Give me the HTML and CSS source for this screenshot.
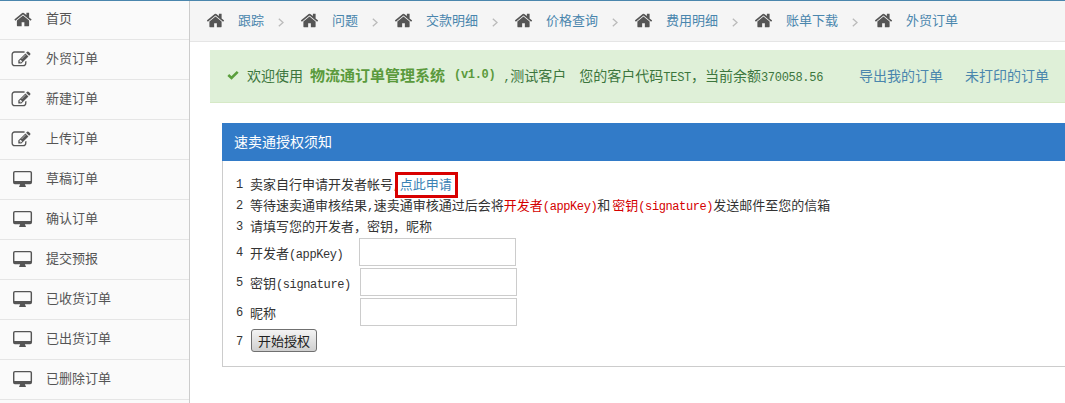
FILE: index.html
```html
<!DOCTYPE html>
<html lang="zh-CN">
<head>
<meta charset="utf-8">
<title>物流通订单管理系统</title>
<link rel="stylesheet" href="styles.css">
</head>
<body>
<svg class="sprite" aria-hidden="true">
  <symbol id="home" viewBox="0 0 1792 1792"><path d="M1472 992v480q0 26-19 45t-45 19h-384v-384h-256v384h-384q-26 0-45-19t-19-45v-480q0-1 .5-3t.5-3l575-474 575 474q1 2 1 6zm223-69l-62 74q-8 9-21 11h-3q-13 0-21-7l-692-577-692 577q-12 8-24 7-13-2-21-11l-62-74q-8-10-7-23.500t11-21.500l719-599q32-26 76-26t76 26l244 204v-195q0-14 9-23t23-9h192q14 0 23 9t9 23v408l219 182q10 8 11 21.500t-7 23.500z"/></symbol>
  <symbol id="edit" viewBox="0 0 1792 1792"><path d="M888 1184l116-116-152-152-116 116v56h96v96h56zm440-720q-16-16-33 1l-350 350q-17 17-1 33t33-1l350-350q17-17 1-33zm80 594v190q0 119-84.500 203.500t-203.500 84.500h-832q-119 0-203.500-84.500t-84.500-203.500v-832q0-119 84.500-203.500t203.500-84.500h832q63 0 117 25 15 7 18 23 3 17-9 29l-49 49q-14 14-32 8-23-6-45-6h-832q-66 0-113 47t-47 113v832q0 66 47 113t113 47h832q66 0 113-47t47-113v-126q0-13 9-22l64-64q15-15 35-7t20 29zm-96-738l288 288-672 672h-288v-288zm444 132l-92 92-288-288 92-92q28-28 68-28t68 28l152 152q28 28 28 68t-28 68z"/></symbol>
  <symbol id="desktop" viewBox="0 0 21 18"><path fill-rule="evenodd" d="M2 0h16a2 2 0 0 1 2 2v10a2 2 0 0 1-2 2h-5.500q.2 1.300 1 2v1h-7v-1q.8-.7 1-2H2a2 2 0 0 1-2-2V2a2 2 0 0 1 2-2zm0 1.500a.5.5 0 0 0-.5.500v8.500h17V2a.5.5 0 0 0-.5-.5z"/></symbol>
  <symbol id="chev" viewBox="0 0 6 9"><path d="M.8.8L5 4.500.8 8.200" fill="none" stroke="currentColor" stroke-width="1.300"/></symbol>
</svg>
<div class="topline"></div>
<div class="app">
  <aside class="sidebar">
    <a class="side-item"><svg class="side-icon"><use href="#home"/></svg><span>首页</span></a>
    <a class="side-item"><svg class="side-icon edit"><use href="#edit"/></svg><span>外贸订单</span></a>
    <a class="side-item"><svg class="side-icon edit"><use href="#edit"/></svg><span>新建订单</span></a>
    <a class="side-item"><svg class="side-icon edit"><use href="#edit"/></svg><span>上传订单</span></a>
    <a class="side-item"><svg class="side-icon"><use href="#desktop"/></svg><span>草稿订单</span></a>
    <a class="side-item"><svg class="side-icon"><use href="#desktop"/></svg><span>确认订单</span></a>
    <a class="side-item"><svg class="side-icon"><use href="#desktop"/></svg><span>提交预报</span></a>
    <a class="side-item"><svg class="side-icon"><use href="#desktop"/></svg><span>已收货订单</span></a>
    <a class="side-item"><svg class="side-icon"><use href="#desktop"/></svg><span>已出货订单</span></a>
    <a class="side-item"><svg class="side-icon"><use href="#desktop"/></svg><span>已删除订单</span></a>
  </aside>
  <main class="main">
    <nav class="crumbs">
      <a class="crumb"><svg class="crumb-icon"><use href="#home"/></svg><span>跟踪</span></a><svg class="chev"><use href="#chev"/></svg>
      <a class="crumb"><svg class="crumb-icon"><use href="#home"/></svg><span>问题</span></a><svg class="chev"><use href="#chev"/></svg>
      <a class="crumb"><svg class="crumb-icon"><use href="#home"/></svg><span>交款明细</span></a><svg class="chev"><use href="#chev"/></svg>
      <a class="crumb"><svg class="crumb-icon"><use href="#home"/></svg><span>价格查询</span></a><svg class="chev"><use href="#chev"/></svg>
      <a class="crumb"><svg class="crumb-icon"><use href="#home"/></svg><span>费用明细</span></a><svg class="chev"><use href="#chev"/></svg>
      <a class="crumb"><svg class="crumb-icon"><use href="#home"/></svg><span>账单下载</span></a><svg class="chev"><use href="#chev"/></svg>
      <a class="crumb"><svg class="crumb-icon"><use href="#home"/></svg><span>外贸订单</span></a>
    </nav>
    <div class="alert">
      <svg class="check" viewBox="0 0 12 10"><path d="M1.300 5L4.500 8 10.700 1.800" fill="none" stroke="currentColor" stroke-width="2.600"/></svg>
      <span class="welcome">欢迎使用</span>
      <strong class="brand">物流通订单管理系统</strong>
      <strong class="version en">(v1.0)</strong>
      <span class="customer"><span class="en">,</span>测试客户</span>
      <span class="balance">您的客户代码<span class="en">TEST</span>，当前余额<span class="en">370058.56</span></span>
      <a class="alert-link first">导出我的订单</a>
      <a class="alert-link">未打印的订单</a>
    </div>
    <section class="panel">
      <h2 class="panel-head">速卖通授权须知</h2>
      <div class="panel-body">
        <div class="line"><span class="num">1</span><span>卖家自行申请开发者帐号<span class="en">,</span><a class="apply">点此申请</a></span></div>
        <div class="line"><span class="num">2</span><span>等待速卖通审核结果<span class="en">,</span>速卖通审核通过后会将<em class="red">开发者<span class="en">(appKey)</span></em>和<em class="red key">密钥<span class="en">(signature)</span></em>发送邮件至您的信箱</span></div>
        <div class="line"><span class="num">3</span><span>请填写您的开发者，密钥，昵称</span></div>
        <div class="form-row first-row"><span class="num">4</span><label class="label">开发者<span class="en">(appKey)</span></label><input class="field" type="text"></div>
        <div class="form-row"><span class="num">5</span><label class="label wide">密钥<span class="en">(signature)</span></label><input class="field" type="text"></div>
        <div class="form-row"><span class="num">6</span><label class="label wide">昵称</label><input class="field" type="text"></div>
        <div class="btn-row"><span class="num">7</span><button class="btn" type="button">开始授权</button></div>
      </div>
    </section>
  </main>
</div>
</body>
</html>
```
FILE: styles.css
```css
* { box-sizing: border-box; }
html, body { margin: 0; height: 100%; overflow: hidden; background: #fff; }
body {
  font-family: "Noto Sans CJK SC", "Liberation Sans", sans-serif;
  font-size: 13px;
  color: #333;
  position: relative;
}
a { cursor: pointer; }
.sprite { display: none; }
.topline { position: absolute; left: 0; top: 0; width: 100%; height: 1px; background: #4a86ad; }
.en { font-family: "Liberation Mono", monospace; font-size: 12px; letter-spacing: -0.4px; }
.app { display: flex; height: 100%; }

.sidebar { flex: 0 0 190px; background: #fafafa; border-right: 1px solid #ccc; }
.side-item {
  display: flex; align-items: center; height: 40px; padding-left: 13px;
  border-bottom: 1px solid #e5e5e5; color: #555;
}
.side-item span { margin-bottom: 5px; }
.side-icon { width: 20px; height: 19px; margin-right: 13px; fill: #555; flex: none; }
.side-icon.edit { margin-left: -2px; margin-right: 15px; }

.main { flex: 1; min-width: 0; }
.crumbs {
  display: flex; align-items: center; height: 42px; padding: 0 0 3px 16px;
  background: #f5f5f5; border-bottom: 1px solid #e5e5e5;
}
.crumb { display: flex; align-items: center; color: #4a86ad; }
.crumb-icon { width: 19px; height: 19px; margin: 2px 13px 0 0; fill: #555; flex: none; }
.chev { width: 6px; height: 9px; margin: 6px 16px 0 14px; color: #bbb; flex: none; }

.alert {
  display: flex; align-items: center; height: 53px; margin: 8px -20px 0 20px;
  padding: 0 0 3px 17px; background: #dff0d8; border-bottom: 1px solid #d6e9c6;
  font-size: 14px; color: #3c763d; white-space: nowrap;
}
.alert .en { letter-spacing: -0.3px; }
.check { width: 12px; height: 10px; margin-right: 8px; color: #5a9e3c; flex: none; }
.brand { margin-left: 7px; font-size: 15px; font-weight: 700; color: #5a9a3c; }
.version { margin-left: 9px; color: #5a9a3c; }
.customer { margin-left: 8px; }
.balance { margin-left: 13px; }
.alert-link { color: #4a86ad; margin-left: 22px; }
.alert-link.first { margin-left: 36px; }

.panel { margin: 20px -20px 0 32px; border: 1px solid #ccc; border-width: 0 0 1px 1px; height: 244px; }
.panel-head {
  margin: 0 0 0 -1px; height: 38px; line-height: 36px; padding-left: 12px;
  background: #327bc8; color: #fff; font-size: 14px; font-weight: 400;
}
.panel-body { padding: 12px 0 0 13px; color: #333; }
.line { display: flex; height: 21px; line-height: 21px; white-space: nowrap; }
.num { flex: 0 0 14px; padding-top: 2px; font-family: "Liberation Mono", monospace; font-size: 12px; }
.red { color: #d40000; font-style: normal; }
.red.key { margin-left: 2px; }
.apply {
  display: inline-block; vertical-align: top;
  margin: 2px -3px 0 -2px; padding: 0 3px 2px 2px; line-height: 18px;
  color: #3a82b4; outline: 3px solid #d80000;
}
.form-row { display: flex; align-items: center; height: 28px; margin-top: 2px; }
.label { flex: 0 0 109px; }
.label.wide { flex-basis: 110px; }
.field { width: 157px; height: 28px; border: 1px solid #ccc; background: #fff; padding: 0 4px; }
.btn-row { display: flex; align-items: center; height: 23px; margin-top: 3px; }
.btn {
  width: 66px; height: 23px; margin-left: 1px; padding: 0; border: 1px solid #707070; border-radius: 3px;
  background: linear-gradient(#f4f4f4, #cfcfcf); color: #222; font: inherit; line-height: 19px;
}
```
